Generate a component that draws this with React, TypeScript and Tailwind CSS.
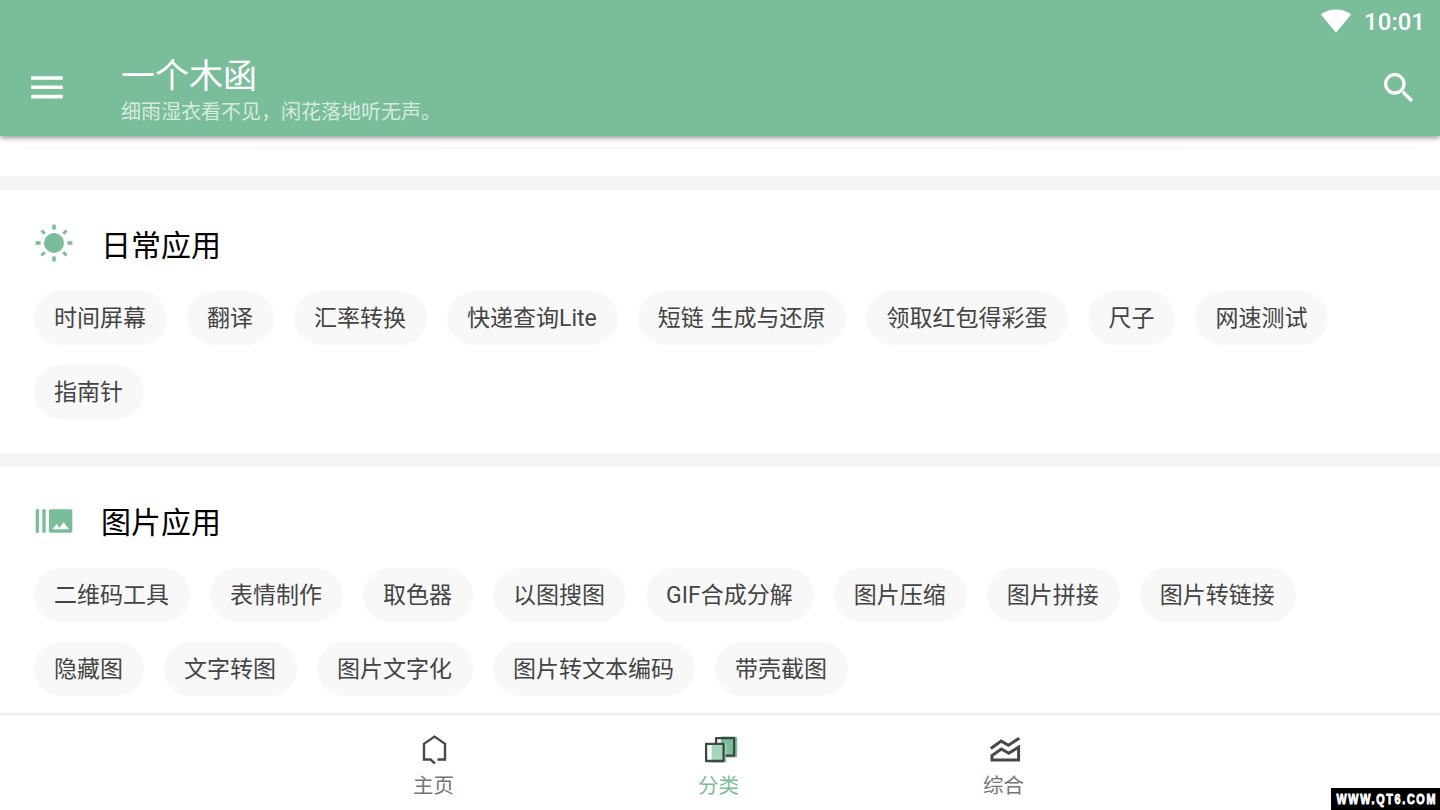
import React from 'react';
import { MdBurstMode, MdSearch } from 'react-icons/md';

interface Section {
  title: string;
  icon: React.ReactNode;
  items: string[];
}

function MenuIcon() {
  return (
    <svg viewBox="0 0 40 40" className="h-10 w-10" fill="none" stroke="currentColor" strokeWidth="3.6">
      <path d="M4.2 10h31.5M4.2 19.3h31.5M4.2 28.6h31.5" />
    </svg>
  );
}

function SunIcon() {
  return (
    <svg viewBox="0 0 40 40" className="h-10 w-10" fill="none" stroke="currentColor">
      <circle cx="20" cy="20" r="10" fill="currentColor" stroke="none" />
      {[0, 90, 180, 270].map((a) => (
        <path key={a} d="M20 1.6v5" strokeWidth="3.5" transform={`rotate(${a} 20 20)`} />
      ))}
      {[45, 135, 225, 315].map((a) => (
        <path key={a} d="M20 2.3v4.6" strokeWidth="3" transform={`rotate(${a} 20 20)`} />
      ))}
    </svg>
  );
}

function HomeIcon() {
  return (
    <svg viewBox="0 0 40 36" className="h-9 w-10" fill="none" stroke="#484848" strokeWidth="2.4">
      <path d="M23.4 28.5H31V12.8L20.5 5.6 10 12.8v15.7h6.6l4.3 4" />
    </svg>
  );
}

function CategoryIcon() {
  return (
    <svg viewBox="0 0 40 36" className="h-9 w-10">
      <path d="M22 5.4h14.6a1.6 1.6 0 0 1 1.6 1.6v18a1.6 1.6 0 0 1-1.6 1.6H22z" fill="#7abd9b" />
      <path d="M7 12.6h18.5v18H7z" fill="#fff" />
      <path d="M12.6 12.6h15v19h-15z" fill="#a5d6bb" />
      <path
        d="M17.1 12.5V7.2h18v17.4h-8.5M7.1 12.8h17.5V30H7.1z"
        fill="none"
        stroke="#3d4743"
        strokeWidth="2.3"
        strokeLinejoin="round"
      />
    </svg>
  );
}

function ChartIcon() {
  return (
    <svg viewBox="0 0 40 36" className="h-9 w-10" fill="none" stroke="#484848" strokeWidth="3">
      <path d="M6.8 17.4L17.2 10.1l7.2 4.1L35.3 7.2" />
      <path d="M8 29v-4.4l9.4-6.6 7.4 4.3 9.8-6.2V29z" />
    </svg>
  );
}

const sections: Section[] = [
  {
    title: '日常应用',
    icon: <SunIcon />,
    items: ['时间屏幕', '翻译', '汇率转换', '快递查询Lite', '短链 生成与还原', '领取红包得彩蛋', '尺子', '网速测试', '指南针'],
  },
  {
    title: '图片应用',
    icon: <MdBurstMode className="h-10 w-10 translate-y-px" />,
    items: [
      '二维码工具', '表情制作', '取色器', '以图搜图', 'GIF合成分解', '图片压缩', '图片拼接', '图片转链接',
      '隐藏图', '文字转图', '图片文字化', '图片转文本编码', '带壳截图',
    ],
  },
];

const tabs = [
  { label: '主页', icon: <HomeIcon />, active: false },
  { label: '分类', icon: <CategoryIcon />, active: true },
  { label: '综合', icon: <ChartIcon />, active: false },
];

function Header() {
  return (
    <header className="relative z-10 h-[136px] shrink-0 bg-[#7abd9b] text-white shadow-[0_2px_5px_rgba(0,0,0,0.4)]">
      <div className="flex h-10 items-center justify-end pt-1 pr-[15px]">
        <svg viewBox="0 0 30 24" className="mr-[13px] mb-[3px] h-6 w-[30px]" fill="currentColor">
          <path d="M0 5.5C8.5-1.2 21.5-1.2 30 5.5L15 23.8z" />
        </svg>
        <span className="text-2xl leading-none font-medium">10:01</span>
      </div>
      <div className="flex h-24 items-center pr-[21px] pl-[27px]">
        <MenuIcon />
        <div className="ml-[54px] flex-1 pt-[7px]">
          <h1 className="text-[34px] leading-[40px]">一个木函</h1>
          <p className="text-xl leading-[32px] text-white/70">细雨湿衣看不见，闲花落地听无声。</p>
        </div>
        <MdSearch className="h-10 w-10" />
      </div>
    </header>
  );
}

function SectionBlock({ title, icon, items }: Section) {
  return (
    <section className="border-t-[14px] border-[#f4f4f4] bg-white px-[34px] pt-[33px] pb-[34px]">
      <div className="flex h-10 items-center text-[#7abd9b]">
        {icon}
        <h2 className="ml-[27px] translate-y-[3px] text-[30px] leading-10 text-black">{title}</h2>
      </div>
      <div className="mt-7 flex flex-wrap gap-5">
        {items.map((item) => (
          <span
            key={item}
            className="h-[54px] rounded-full bg-[#f8f8f8] pr-[21px] pl-5 text-[23px] leading-[55px] [word-spacing:1px] whitespace-nowrap text-[#444]"
          >
            {item}
          </span>
        ))}
      </div>
    </section>
  );
}

export default function App() {
  return (
    <div className="relative flex h-[810px] w-[1440px] flex-col overflow-hidden bg-white font-[Roboto,'Noto_Sans_CJK_SC',sans-serif]">
      <Header />
      <main className="min-h-0 flex-1 overflow-hidden">
        {/* bottom edge of the card scrolled under the header */}
        <div className="h-10 px-6 pt-[11px]">
          <div className="h-0.5 rounded-full bg-linear-to-r from-[#fafafa] via-[#f1f8f5] to-[#fafafa]" />
        </div>
        {sections.map((s) => (
          <SectionBlock key={s.title} {...s} />
        ))}
      </main>
      <nav className="relative flex h-24 shrink-0 justify-center border-t border-[#e8e8e8] bg-white pr-0.5 shadow-[0_-1px_2px_rgba(0,0,0,0.08)]">
        {tabs.map((t) => (
          <div key={t.label} className="flex w-[285px] flex-col items-center pt-4">
            {t.icon}
            <span
              className={
                t.active
                  ? 'mt-1 mr-px text-[20.5px] leading-[30px] text-[#7abd9b]'
                  : 'mt-1 mr-px text-[20.5px] leading-[30px] text-[#757575]'
              }
            >
              {t.label}
            </span>
          </div>
        ))}
      </nav>
      <div className="absolute right-0 bottom-0 h-[22px] w-[109px] bg-black">
        <svg viewBox="0 0 109 22" className="h-full w-full overflow-visible">
          <text
            transform="translate(5.5 16.4) scale(.77 1)"
            className="fill-white stroke-white font-['Liberation_Sans',sans-serif] text-[14px] font-bold tracking-[2.2px]"
            strokeWidth="0.9"
          >
            WWW.QT6.COM
          </text>
        </svg>
      </div>
    </div>
  );
}
